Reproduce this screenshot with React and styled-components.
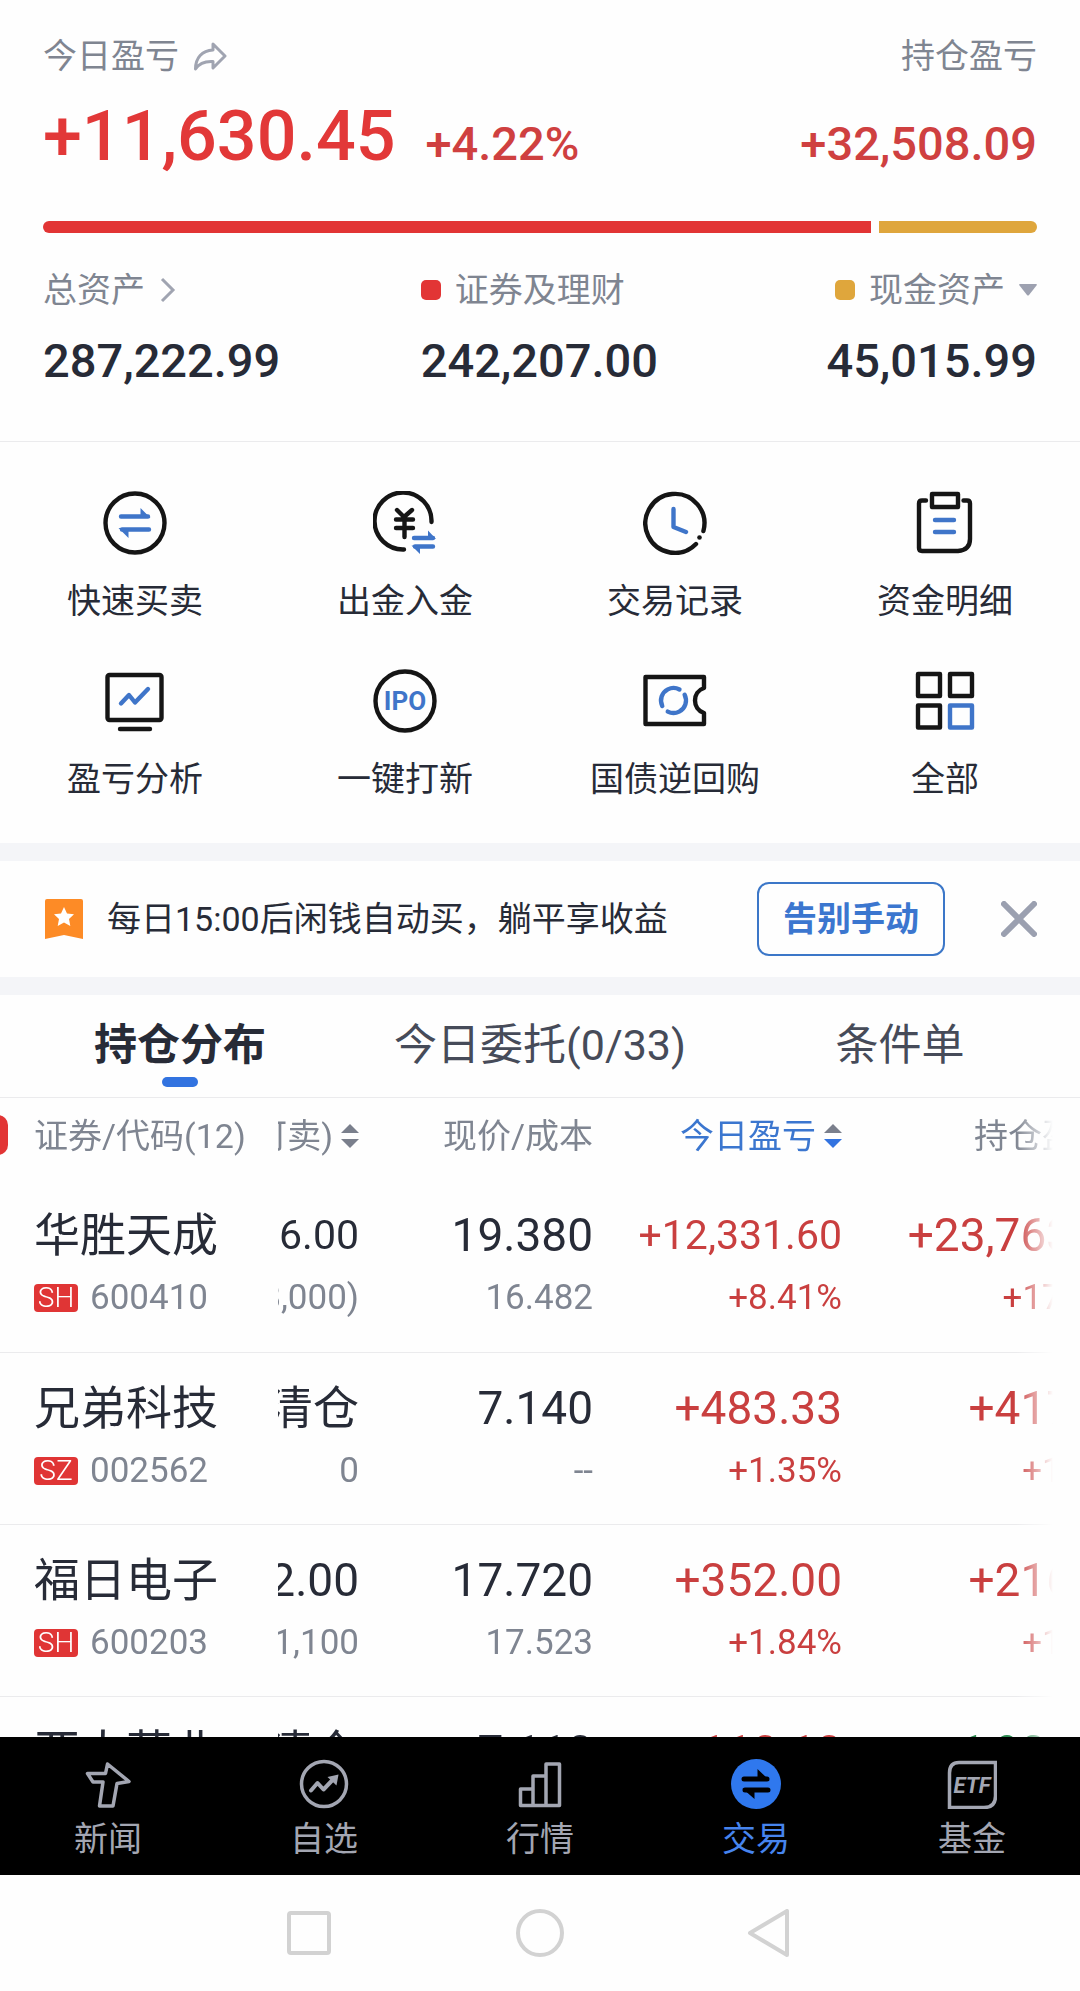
import React, { useState } from 'react';
import styled, { createGlobalStyle } from 'styled-components';

const GlobalStyle = createGlobalStyle`
    * {
        box-sizing: border-box;
    }

    body {
        margin: 0;
        background: #fefefe;
        color: #272b37;
        font-family: Roboto, "Noto Sans CJK SC", sans-serif;
        font-size: 34px;
        line-height: 40px;
    }

    button {
        padding: 0;
        border: 0;
        background: none;
        color: inherit;
        font: inherit;
        cursor: pointer;
    }

    a {
        color: inherit;
        text-decoration: none;
    }

    svg {
        display: block;
        flex: none;
    }
`;

const Screen = styled.div`
    display: flex;
    flex-direction: column;
    height: 100vh;
    overflow: hidden;
`;

const Summary = styled.section`
    padding: 36px 43px 52px;
    border-bottom: 1px solid #ebebed;
`;

const SpreadRow = styled.div`
    display: flex;
    align-items: baseline;
    justify-content: space-between;
`;

const Label = styled.span`
    display: flex;
    align-items: center;
    gap: 14px;
    color: #7f8591;
`;

const ProfitRow = styled(SpreadRow)`
    margin: 18px 0 43px;
    color: #e23838;
    font-weight: 500;
`;

const ProfitGroup = styled.div`
    display: flex;
    align-items: baseline;
    gap: 30px;
`;

const Profit = styled.span`
    font-size: 70px;
    line-height: 84px;
`;

const ProfitSide = styled.span`
    color: #cf4040;
    font-size: 47px;
`;

const RatioBar = styled.div`
    display: flex;
    gap: 8px;
    height: 12px;
    margin-bottom: 37px;
    border-radius: 6px;
    overflow: hidden;
`;

const RatioPart = styled.span`
    flex: ${({ $share }) => $share};
    background: ${({ $color }) => $color};
`;

const Assets = styled.div`
    display: grid;
    grid-template-columns: 38fr 38fr 24fr;
`;

const Asset = styled.div`
    display: flex;
    flex-direction: column;
    align-items: ${({ $end }) => ($end ? 'flex-end' : 'flex-start')};
    gap: 23px;
    white-space: nowrap;
`;

const AssetValue = styled.span`
    font-size: 47px;
    font-weight: 500;
    line-height: 56px;
`;

const Swatch = styled.span`
    width: 20px;
    height: 20px;
    border-radius: 5px;
    background: ${({ $color }) => $color};
`;

const Shortcuts = styled.nav`
    display: grid;
    grid-template-columns: repeat(4, 1fr);
    row-gap: 48px;
    padding: 49px 0 44px;
`;

const Shortcut = styled.a`
    display: flex;
    flex-direction: column;
    align-items: center;
    gap: 26px;
`;

const Banner = styled.section`
    display: flex;
    align-items: center;
    padding: 21px 43px;
    border: solid #f4f5f8;
    border-width: 18px 0;
`;

const BannerText = styled.p`
    flex: 1;
    margin: 0 0 0 22px;
`;

const BannerButton = styled.button`
    height: 74px;
    margin-right: 56px;
    padding: 0 24px;
    border: 2px solid #3c77c8;
    border-radius: 12px;
    color: #3b76cf;
    font-weight: 700;
`;

const Tabs = styled.div`
    display: grid;
    grid-template-columns: repeat(3, 1fr);
    border-bottom: 1px solid #ebebed;
`;

const Tab = styled.button`
    display: flex;
    flex-direction: column;
    align-items: center;
    gap: 7px;
    padding: 25px 0 10px;
    color: ${({ $active }) => ($active ? '#272b37' : '#464b59')};
    font-size: 43px;
    font-weight: ${({ $active }) => ($active ? 700 : 400)};
    line-height: 50px;

    &::after {
        content: '';
        width: 36px;
        height: 10px;
        border-radius: 5px;
        background: ${({ $active }) => ($active ? '#3273e0' : 'transparent')};
    }
`;

const Holdings = styled.section`
    position: relative;
    flex: 1;
    min-height: 0;
    overflow: hidden;
`;

const SideBadge = styled.span`
    position: absolute;
    top: 17px;
    left: -32px;
    width: 40px;
    height: 40px;
    border-radius: 10px;
    background: #e23535;
`;

const Scroller = styled.div`
    height: 100%;
    overflow: hidden;
    mask-image: linear-gradient(to right, #000 calc(100% - 64px), transparent calc(100% - 27px));
`;

const Table = styled.table`
    width: 1136px;
    border-collapse: collapse;
    table-layout: fixed;
    white-space: nowrap;
`;

const HeadCell = styled.th`
    height: 82px;
    padding: 0 0 6px;
    color: ${({ $active }) => ($active ? '#3b76cf' : '#7f8591')};
    font-weight: 400;
`;

const Cell = styled.td`
    height: 172px;
    padding: 27px 0 0;
    border-bottom: 1px solid #ebebed;
    vertical-align: top;
`;

const Stack = styled.div`
    display: flex;
    flex-direction: column;
    align-items: ${({ $start }) => ($start ? 'flex-start' : 'flex-end')};
    gap: 15px;
    padding-left: ${({ $start }) => ($start ? 34 : 0)}px;
    overflow: hidden;
`;

const HeadContent = styled.div`
    display: flex;
    align-items: center;
    justify-content: ${({ $start }) => ($start ? 'flex-start' : 'flex-end')};
    padding-left: ${({ $start }) => ($start ? 34 : 0)}px;
    overflow: hidden;
`;

const SortButton = styled.button`
    display: flex;
    flex: none;
    align-items: center;
    gap: 8px;
`;

const tones = { dark: '#272b37', grey: '#7f8591', red: '#c93f3f', green: '#2c8a50' };

const Main = styled.span`
    color: ${({ $tone }) => tones[$tone]};
    font-size: ${({ $small }) => ($small ? 41 : 46)}px;
    line-height: 56px;
`;

const Sub = styled.span`
    display: flex;
    align-items: center;
    gap: 12px;
    color: ${({ $tone }) => tones[$tone]};
    font-size: 35px;
`;

const Market = styled.span`
    width: 44px;
    height: 28px;
    border-radius: 4px;
    background: #e03535;
    color: #fff;
    font-size: 28px;
    font-weight: 300;
    line-height: 28px;
    text-align: center;
`;

const BottomNav = styled.nav`
    display: grid;
    grid-template-columns: repeat(5, 1fr);
    padding: 22px 0 16px;
    background: #000;
`;

const NavLink = styled.a`
    display: flex;
    flex-direction: column;
    align-items: center;
    gap: 10px;
    color: ${({ $active }) => ($active ? '#4684ee' : '#a3a6b2')};
`;

const SystemBar = styled.div`
    display: flex;
    justify-content: center;
    gap: 183px;
    padding: 34px 0;
`;

const ShortcutIcon = ({ children }) => (
    <svg width="64" height="64" viewBox="0 0 64 64" fill="none" stroke="#151515" strokeWidth="4.4" strokeLinecap="round" strokeLinejoin="round">
        {children}
    </svg>
);

const NavIcon = ({ children }) => (
    <svg width="50" height="50" viewBox="0 0 50 50" fill="none" stroke="#a3a6b2" strokeWidth="3.5" strokeLinecap="round" strokeLinejoin="round">
        {children}
    </svg>
);

const BLUE = '#3f75c9';

const shortcuts = [
    {
        label: '快速买卖',
        icon: (
            <>
                <circle cx="32" cy="32" r="29.5" />
                <path d="M18 25.500H45M46 38.500H19" stroke={BLUE} />
                <path d="M37.500 17L47.500 27H37.500ZM15.500 37H25.500V47Z" fill={BLUE} stroke="none" />
            </>
        ),
    },
    {
        label: '出金入金',
        icon: (
            <>
                <path d="M58.500 31A28.500 28.500 0 1 0 31 58.500" />
                <path d="M24 19L31 26L39 19M23 28.500H40M23 37H40M31.500 27V46" />
                <path d="M41 47H60M60 55.500H42" stroke={BLUE} />
                <path d="M55 39.500L63 48H55ZM38.500 54.500H47V63Z" fill={BLUE} stroke="none" />
            </>
        ),
    },
    {
        label: '交易记录',
        icon: (
            <>
                <path d="M60.400 40A29.500 29.500 0 1 0 53 53" />
                <circle cx="56.500" cy="46.500" r="2.300" fill="#151515" stroke="none" />
                <path d="M30.500 18V36L43 41" stroke={BLUE} />
            </>
        ),
    },
    {
        label: '资金明细',
        icon: (
            <>
                <rect x="19" y="3" width="26" height="13" />
                <path d="M13 9.500H9Q6 9.500 6 12.500V57Q6 60 9 60H45Q57 59 57 48V12.500Q57 9.500 54 9.500H50.500" />
                <path d="M22 29H41M22 41H41" stroke={BLUE} />
            </>
        ),
    },
    {
        label: '盈亏分析',
        icon: (
            <>
                <rect x="4.500" y="6" width="54" height="45" rx="2" />
                <path d="M17 60H47" />
                <path d="M18 34.500L26 26L32 33.500L45 20" stroke={BLUE} />
            </>
        ),
    },
    {
        label: '一键打新',
        icon: (
            <>
                <circle cx="32" cy="32" r="29.5" />
                <text x="32" y="41" textAnchor="middle" fontSize="26" fontWeight="700" fill={BLUE} stroke="none">
                    IPO
                </text>
            </>
        ),
    },
    {
        label: '国债逆回购',
        icon: (
            <>
                <path d="M61 19V8H2.500V55H61V44C49 40 49 23 61 19Z" />
                <circle cx="30.500" cy="31.500" r="12.500" strokeDasharray="31.270 8" transform="rotate(-27 30.500 31.500)" stroke={BLUE} />
            </>
        ),
    },
    {
        label: '全部',
        icon: (
            <>
                <path d="M5 5H27V27H5ZM37 5H59V27H37ZM5 36.500H27V58.500H5Z" />
                <path d="M37 36.500H59V58.500H37Z" stroke={BLUE} />
            </>
        ),
    },
];

const navItems = [
    {
        label: '新闻',
        icon: <path d="M24.500 5L46 22.500L34 24.500L30 47H16.500L20 23H10L4.500 14.500H22.500Z" />,
    },
    {
        label: '自选',
        icon: (
            <>
                <circle cx="25" cy="25" r="22.500" />
                <path d="M12 31.500L18.500 24L24.500 30.500L34 20.500" strokeWidth="4" />
                <path d="M28.500 18L39.500 15.500L37.500 26.500Z" fill="#a3a6b2" stroke="none" />
            </>
        ),
    },
    {
        label: '行情',
        icon: <path d="M5.500 30H18V46.500H5.500ZM18 17H31V46.500H18ZM31 5H44.500V46.500H31Z" />,
    },
    {
        label: '交易',
        active: true,
        icon: (
            <>
                <circle cx="25" cy="25" r="25" fill="#2f78ee" stroke="none" />
                <path d="M13 20H36M37 31H14" stroke="#000" strokeWidth="5" />
                <path d="M26.500 10L38.500 21.500H26.500ZM11.500 29.500H23.500V40Z" fill="#000" stroke="none" />
            </>
        ),
    },
    {
        label: '基金',
        icon: (
            <>
                <path d="M12 3.500H48.500V37Q48.500 48.500 37 48.500H2.500V14Q2.500 3.500 12 3.500Z" strokeLinejoin="miter" />
                <text x="25" y="34" textAnchor="middle" fontSize="22" fontStyle="italic" fontWeight="700" fill="#a3a6b2" stroke="none">
                    ETF
                </text>
            </>
        ),
    },
];

const columns = [
    { label: '证券/代码(12)', width: 278 },
    { label: '持仓(可卖)', width: 81, sort: true },
    { label: '现价/成本', width: 234 },
    { label: '今日盈亏', width: 249, sort: true, active: true },
    { label: '持仓盈亏', width: 294, sort: true },
];

const holdings = [
    {
        name: '华胜天成', market: 'SH', code: '600410',
        value: '158,916.00', amount: '8,200(8,000)',
        price: '19.380', cost: '16.482',
        today: '+12,331.60', todayRate: '+8.41%',
        total: '+23,763.60', totalRate: '+17.58%',
        long: true,
    },
    {
        name: '兄弟科技', market: 'SZ', code: '002562',
        value: '清仓', amount: '0',
        price: '7.140', cost: '--',
        today: '+483.33', todayRate: '+1.35%',
        total: '+417.33', totalRate: '+1.17%',
    },
    {
        name: '福日电子', market: 'SH', code: '600203',
        value: '19,492.00', amount: '1,100',
        price: '17.720', cost: '17.523',
        today: '+352.00', todayRate: '+1.84%',
        total: '+216.70', totalRate: '+1.12%',
    },
    {
        name: '亚太药业', market: 'SZ', code: '002370',
        value: '清仓', amount: '0',
        price: '7.110', cost: '--',
        today: '+110.10', todayRate: '+0.72%',
        total: '-1,986.00', totalRate: '-6.20%',
        loss: true,
    },
];

const SortArrows = ({ active }) => (
    <svg width="18" height="26" viewBox="0 0 18 26">
        <path d="M9 1L18 10H0Z" fill="#7a7f8c" />
        <path d="M0 16H18L9 25Z" fill={active ? '#3273e0' : '#7a7f8c'} />
    </svg>
);

const HoldingRow = ({ item }) => (
    <tr>
        <Cell>
            <Stack $start>
                <Main $tone="dark">{item.name}</Main>
                <Sub $tone="grey">
                    <Market>{item.market}</Market>
                    {item.code}
                </Sub>
            </Stack>
        </Cell>
        <Cell>
            <Stack>
                <Main $tone="dark" $small={item.long}>{item.value}</Main>
                <Sub $tone="grey">{item.amount}</Sub>
            </Stack>
        </Cell>
        <Cell>
            <Stack>
                <Main $tone="dark">{item.price}</Main>
                <Sub $tone="grey">{item.cost}</Sub>
            </Stack>
        </Cell>
        <Cell>
            <Stack>
                <Main $tone="red" $small={item.long}>{item.today}</Main>
                <Sub $tone="red">{item.todayRate}</Sub>
            </Stack>
        </Cell>
        <Cell>
            <Stack>
                <Main $tone={item.loss ? 'green' : 'red'}>{item.total}</Main>
                <Sub $tone={item.loss ? 'green' : 'red'}>{item.totalRate}</Sub>
            </Stack>
        </Cell>
    </tr>
);

const tabs = ['持仓分布', '今日委托(0/33)', '条件单'];

const App = () => {
    const [tab, setTab] = useState(tabs[0]);

    return (
        <Screen>
            <GlobalStyle />

            <Summary>
                <SpreadRow>
                    <Label>
                        今日盈亏
                        <svg width="34" height="30" viewBox="0 0 34 30" fill="none" stroke="#a0a4b1" strokeWidth="3" strokeLinejoin="round">
                            <path d="M20 9V3L32 15L20 27V20.500C11 20 6 22.500 2.500 28C2.500 17 9 9.500 20 9Z" />
                        </svg>
                    </Label>
                    <Label>持仓盈亏</Label>
                </SpreadRow>
                <ProfitRow>
                    <ProfitGroup>
                        <Profit>+11,630.45</Profit>
                        <ProfitSide>+4.22%</ProfitSide>
                    </ProfitGroup>
                    <ProfitSide>+32,508.09</ProfitSide>
                </ProfitRow>
                <RatioBar>
                    <RatioPart $share={84} $color="#e23535" />
                    <RatioPart $share={16} $color="#dfa63c" />
                </RatioBar>
                <Assets>
                    <Asset>
                        <Label>
                            总资产
                            <svg width="18" height="26" viewBox="0 0 18 26" fill="none" stroke="#a0a4b1" strokeWidth="3">
                                <path d="M3 2L14 13L3 24" />
                            </svg>
                        </Label>
                        <AssetValue>287,222.99</AssetValue>
                    </Asset>
                    <Asset>
                        <Label>
                            <Swatch $color="#e23535" />
                            证券及理财
                        </Label>
                        <AssetValue>242,207.00</AssetValue>
                    </Asset>
                    <Asset $end>
                        <Label>
                            <Swatch $color="#dfa63c" />
                            现金资产
                            <svg width="18" height="12" viewBox="0 0 18 12">
                                <path d="M1 0H17Q18.500 0 17.500 1.500L10 11Q9 12 8 11L.500 1.500Q-.500 0 1 0Z" fill="#9da1b0" />
                            </svg>
                        </Label>
                        <AssetValue>45,015.99</AssetValue>
                    </Asset>
                </Assets>
            </Summary>

            <Shortcuts>
                {shortcuts.map(({ label, icon }) => (
                    <Shortcut key={label} href="#">
                        <ShortcutIcon>{icon}</ShortcutIcon>
                        {label}
                    </Shortcut>
                ))}
            </Shortcuts>

            <Banner>
                <svg width="42" height="42" viewBox="0 0 42 42">
                    <path d="M4 1H38Q40 1 40 3V41L21 37L2 41V3Q2 1 4 1Z" fill="#fd8b26" />
                    <path d="M21 9L24 15.500L31 16.300L26 21L27.300 28L21 24.600L14.700 28L16 21L11 16.300L18 15.500Z" fill="#fff" />
                </svg>
                <BannerText>每日15:00后闲钱自动买，躺平享收益</BannerText>
                <BannerButton>告别手动</BannerButton>
                <button aria-label="关闭">
                    <svg width="36" height="36" viewBox="0 0 36 36" stroke="#9ba0b0" strokeWidth="6" strokeLinecap="round">
                        <path d="M3 3L33 33M33 3L3 33" />
                    </svg>
                </button>
            </Banner>

            <Tabs>
                {tabs.map((name) => (
                    <Tab key={name} $active={name === tab} onClick={() => setTab(name)}>
                        {name}
                    </Tab>
                ))}
            </Tabs>

            <Holdings>
                <SideBadge />
                <Scroller>
                    <Table>
                        <colgroup>
                            {columns.map(({ label, width }) => (
                                <col key={label} width={width} />
                            ))}
                        </colgroup>
                        <thead>
                            <tr>
                                {columns.map(({ label, sort, active }, index) => (
                                    <HeadCell key={label} $active={active}>
                                        <HeadContent $start={index === 0}>
                                            {sort ? (
                                                <SortButton>
                                                    {label}
                                                    <SortArrows active={active} />
                                                </SortButton>
                                            ) : label}
                                        </HeadContent>
                                    </HeadCell>
                                ))}
                            </tr>
                        </thead>
                        <tbody>
                            {holdings.map((item) => (
                                <HoldingRow key={item.code} item={item} />
                            ))}
                        </tbody>
                    </Table>
                </Scroller>
            </Holdings>

            <BottomNav>
                {navItems.map(({ label, icon, active }) => (
                    <NavLink key={label} href="#" $active={active}>
                        <NavIcon>{icon}</NavIcon>
                        {label}
                    </NavLink>
                ))}
            </BottomNav>

            <SystemBar>
                <button aria-label="最近任务">
                    <svg width="48" height="48" viewBox="0 0 48 48" fill="none" stroke="#d2d2d2" strokeWidth="4">
                        <rect x="4" y="4" width="40" height="40" rx="2" />
                    </svg>
                </button>
                <button aria-label="主页">
                    <svg width="48" height="48" viewBox="0 0 48 48" fill="none" stroke="#d2d2d2" strokeWidth="4">
                        <circle cx="24" cy="24" r="22" />
                    </svg>
                </button>
                <button aria-label="返回">
                    <svg width="48" height="48" viewBox="0 0 48 48" fill="none" stroke="#d2d2d2" strokeWidth="4" strokeLinejoin="round">
                        <path d="M40 2V46L3 24Z" />
                    </svg>
                </button>
            </SystemBar>
        </Screen>
    );
};

export default App;
